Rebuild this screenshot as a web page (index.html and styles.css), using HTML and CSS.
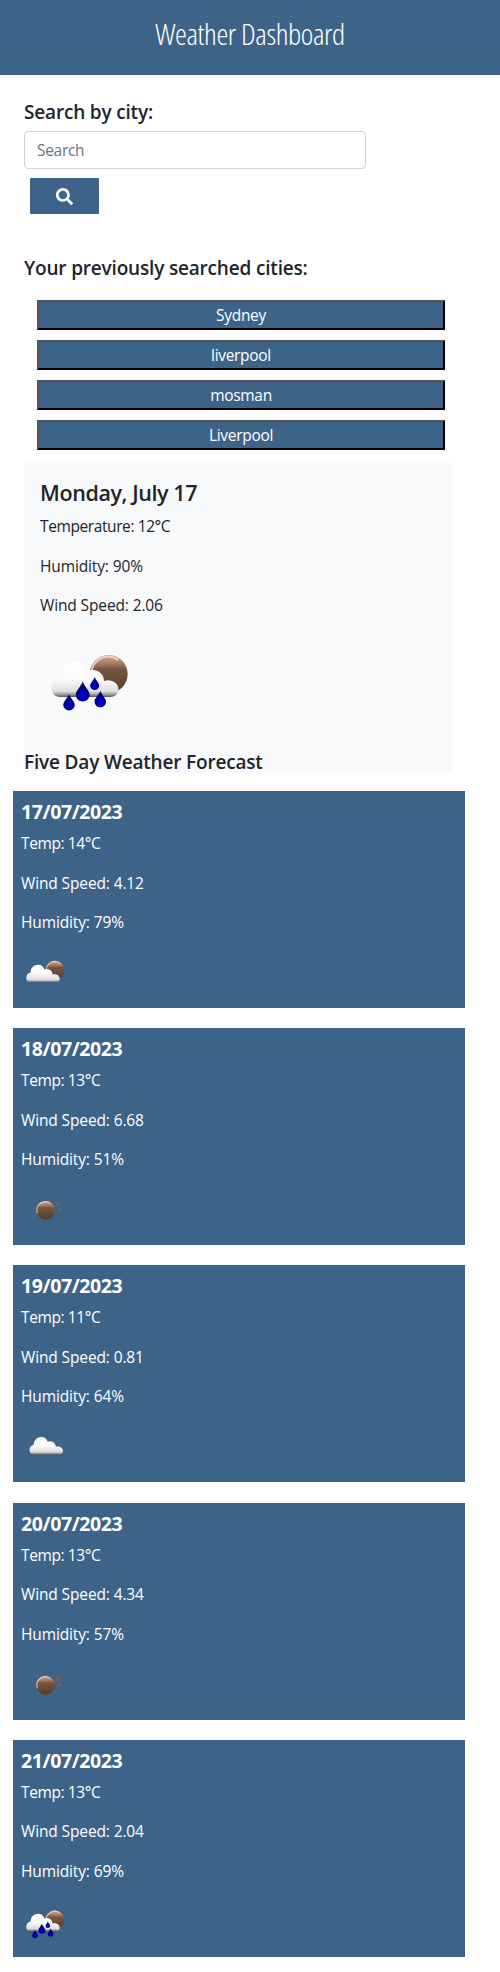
FILE: index.html
```html
<!DOCTYPE html>
<html lang="en">
<head>
<meta charset="utf-8">
<title>Weather Dashboard</title>
<link rel="stylesheet" href="styles.css">
</head>
<body>
<svg class="defs" width="0" height="0" aria-hidden="true">
  <defs>
    <linearGradient id="moon-fill" x1="0" y1="0" x2="0" y2="1">
      <stop offset="0" stop-color="#cda58c"/>
      <stop offset=".22" stop-color="#a87f66"/>
      <stop offset=".36" stop-color="#785540"/>
      <stop offset="1" stop-color="#553c2a"/>
    </linearGradient>
    <linearGradient id="cloud-fill" gradientUnits="userSpaceOnUse" x1="0" y1="35" x2="0" y2="71">
      <stop offset="0" stop-color="#fff"/>
      <stop offset=".5" stop-color="#fafafa"/>
      <stop offset=".84" stop-color="#dedede"/>
      <stop offset=".92" stop-color="#a5a5a5"/>
      <stop offset="1" stop-color="#555"/>
    </linearGradient>
    <radialGradient id="drop-fill" cx=".5" cy=".7" r=".6">
      <stop offset="0" stop-color="#0000e0"/>
      <stop offset="1" stop-color="#00005c"/>
    </radialGradient>
    <g id="moon">
      <circle r="19" fill="url(#moon-fill)"/>
      <path d="M-16.500 5A17 17 0 0 1 9-14.500" fill="none" stroke="#f3ddd0" stroke-width="2.200" stroke-linecap="round" opacity=".8"/>
    </g>
    <path id="cloud" fill="url(#cloud-fill)" d="M19 71C14 71 10.500 67 10.500 62C10.500 56 14 52 19 51C19 42 26 35.500 34 35.500C40.500 35.500 45 39 47 45C50 43.500 54 43.500 57.500 45.500C61 47.500 63 51 63 55C70 52.500 77.500 57 77.500 63C77.500 68 74 71 69 71Z"/>
    <path id="drop" fill="url(#drop-fill)" d="M0 0C1.500 5 7 9 7 13.500A7 6.500 0 0 1-7 13.500C-7 9-1.500 5 0 0Z"/>
    <symbol id="rain" viewBox="0 0 100 100">
      <use href="#moon" x="67.700" y="48"/>
      <use href="#cloud"/>
      <use href="#drop" transform="translate(41.700 55.500)"/>
      <use href="#drop" transform="translate(53.700 51) scale(.65)"/>
      <use href="#drop" transform="translate(28 68) scale(.82)"/>
      <use href="#drop" transform="translate(59.300 64.800) scale(.82)"/>
    </symbol>
    <symbol id="partly" viewBox="0 0 100 100">
      <use href="#moon" x="68" y="46.500"/>
      <use href="#cloud"/>
    </symbol>
    <symbol id="cloudy" viewBox="0 0 100 100">
      <use href="#cloud" x="6.500" y="-3.500"/>
    </symbol>
    <symbol id="clear" viewBox="0 0 100 100">
      <use href="#moon" x="49" y="52.800"/>
      <path fill="#80604f" d="M74 34l1.800 3.700 4.200.4-3.200 2.800 1.200 4.100-4-2.200-4 2.200 1.200-4.100-3.200-2.800 4.200-.4zM77 47l1.500 3 3.500.3-2.600 2.300 1 3.500-3.400-1.900-3.400 1.900 1-3.500-2.600-2.300 3.500-.3z"/>
    </symbol>
  </defs>
</svg>

<header class="header"><h1 class="title">Weather Dashboard</h1></header>

<main class="content">
  <section class="search">
    <h2 class="heading">Search by city:</h2>
    <input class="search-input" type="text" placeholder="Search">
    <button class="search-button" aria-label="Search">
      <svg width="17" height="17" viewBox="0 0 512 512"><path fill="#fff" d="M505 442.700L405.300 343c-4.500-4.500-10.600-7-17-7H372c27.600-35.300 44-79.700 44-128C416 93.100 322.900 0 208 0S0 93.100 0 208s93.100 208 208 208c48.300 0 92.700-16.400 128-44v16.300c0 6.400 2.500 12.500 7 17l99.700 99.700c9.400 9.400 24.600 9.400 33.900 0l28.300-28.300c9.400-9.400 9.400-24.600.1-34zM208 336c-70.700 0-128-57.200-128-128 0-70.700 57.200-128 128-128 70.700 0 128 57.200 128 128 0 70.700-57.200 128-128 128z"/></svg>
    </button>
  </section>

  <section class="history">
    <h2 class="heading">Your previously searched cities:</h2>
    <div class="cities">
      <button class="city">Sydney</button>
      <button class="city">liverpool</button>
      <button class="city">mosman</button>
      <button class="city">Liverpool</button>
    </div>
  </section>

  <section class="today">
    <div class="today-body">
      <h2 class="today-date">Monday, July 17</h2>
      <p class="reading temperature">Temperature: 12°C</p>
      <p class="reading">Humidity: 90%</p>
      <p class="reading">Wind Speed: 2.06</p>
      <svg class="today-icon"><use href="#rain"/></svg>
    </div>
    <h2 class="heading">Five Day Weather Forecast</h2>
  </section>
</main>

<section class="forecast">
  <article class="day">
    <h3 class="day-date">17/07/2023</h3>
    <p class="reading temperature">Temp: 14°C</p>
    <p class="reading">Wind Speed: 4.12</p>
    <p class="reading">Humidity: 79%</p>
    <svg class="day-icon"><use href="#partly"/></svg>
  </article>
  <article class="day">
    <h3 class="day-date">18/07/2023</h3>
    <p class="reading temperature">Temp: 13°C</p>
    <p class="reading">Wind Speed: 6.68</p>
    <p class="reading">Humidity: 51%</p>
    <svg class="day-icon"><use href="#clear"/></svg>
  </article>
  <article class="day">
    <h3 class="day-date">19/07/2023</h3>
    <p class="reading temperature">Temp: 11°C</p>
    <p class="reading">Wind Speed: 0.81</p>
    <p class="reading">Humidity: 64%</p>
    <svg class="day-icon"><use href="#cloudy"/></svg>
  </article>
  <article class="day">
    <h3 class="day-date">20/07/2023</h3>
    <p class="reading temperature">Temp: 13°C</p>
    <p class="reading">Wind Speed: 4.34</p>
    <p class="reading">Humidity: 57%</p>
    <svg class="day-icon"><use href="#clear"/></svg>
  </article>
  <article class="day">
    <h3 class="day-date">21/07/2023</h3>
    <p class="reading temperature">Temp: 13°C</p>
    <p class="reading">Wind Speed: 2.04</p>
    <p class="reading">Humidity: 69%</p>
    <svg class="day-icon"><use href="#rain"/></svg>
  </article>
</section>
</body>
</html>
```
FILE: styles.css
```css
* { box-sizing: border-box; }
body {
  margin: 0;
  background: #fff;
  color: #212529;
  font: 400 15.5px/24px "Segoe UI", "Open Sans", "Noto Sans", sans-serif;
  letter-spacing: -0.13px;
}
h1, h2, h3, p { margin: 0; }
svg { display: block; }
.defs { position: absolute; }

.header {
  height: 75px;
  padding-top: 15px;
  background: #3e6388;
  color: #fff;
  text-align: center;
}
.title {
  font-size: 30px;
  line-height: 38px;
  font-weight: 350;
  font-stretch: 75%;
  letter-spacing: -0.4px;
}

.content { padding: 25px 48px 0 24px; }
.heading {
  font-size: 19px;
  line-height: 24px;
  font-weight: 600;
  letter-spacing: -0.18px;
}
.search { height: 156px; }
.search-input {
  display: block;
  width: 342px;
  height: 38px;
  margin-top: 7px;
  padding: 6px 12px;
  border: 1px solid #ced4da;
  border-radius: 4px;
  font: inherit;
  letter-spacing: -0.3px;
}
.search-input::placeholder { color: #6c757d; opacity: 1; }
.search-button {
  display: flex;
  align-items: center;
  justify-content: center;
  width: 69px;
  height: 36px;
  margin: 9px 0 0 6px;
  padding: 0;
  border: 0;
  border-radius: 1px;
  background: #3e6388;
}

.cities {
  display: grid;
  gap: 10px;
  padding: 20px 7px 13px 13px;
}
.city {
  height: 30px;
  padding: 0;
  border: 2px outset #000;
  background: #3e6388;
  color: #fff;
  font: inherit;
  line-height: 24px;
  letter-spacing: -0.3px;
}

.today { height: 310px; background: #f8f9fa; }
.today-body { height: 287px; padding: 16px 16px 0; }
.today-date {
  margin-bottom: 4px;
  font-size: 21.500px;
  line-height: 28px;
  font-weight: 600;
  letter-spacing: -0.4px;
}
.reading { height: 39.500px; padding-top: 3px; }
.temperature { letter-spacing: -0.4px; }
.today-icon { width: 100px; height: 100px; margin: -3.500px 0 0 1px; }

.forecast {
  display: grid;
  gap: 20.200px;
  width: 452px;
  margin: 18px 0 0 13px;
  padding-bottom: 15px;
}
.day {
  height: 217px;
  padding: 9px 8px 0;
  background: #3e6388;
  color: #fff;
}
.day-date {
  margin-bottom: 4px;
  font-size: 19.500px;
  line-height: 24px;
  font-weight: 700;
  letter-spacing: -0.4px;
}
.day-icon { width: 50px; height: 50px; margin-top: 0.500px; }
```
